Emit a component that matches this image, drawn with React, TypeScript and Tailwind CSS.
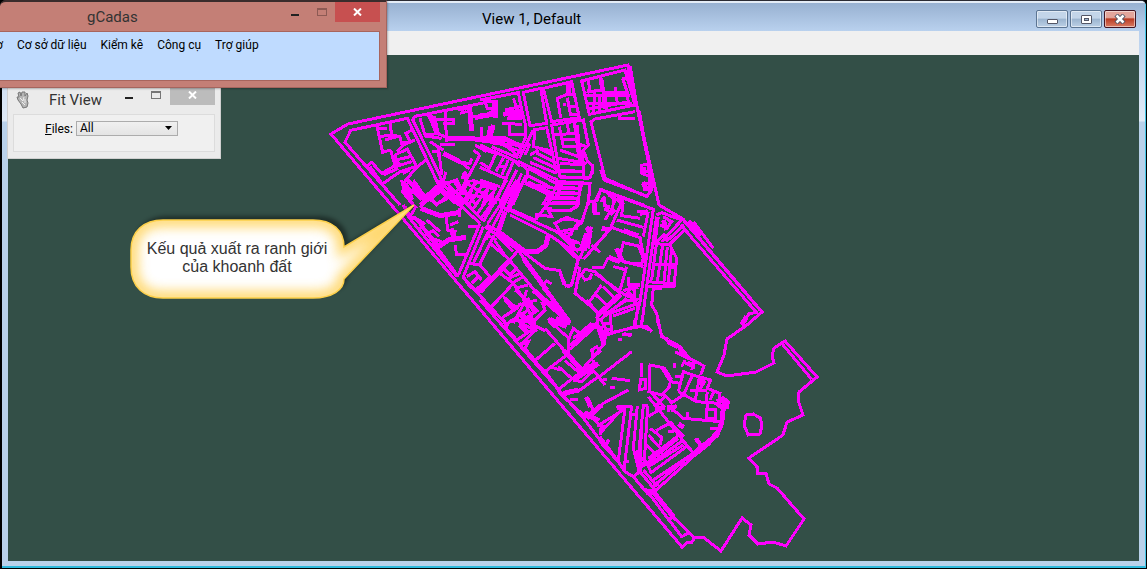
import { ReactNode } from "react"

const outline =
    "M331,134 L348,124 L500,92 L628,65 L659,205 L683,219 L762,312 L747,325 L727,339 L724,355 L717,372 L727,376 L756,372 L774,363 L772,356 L774,348 L785,341 L817,377 L799,392 L798,400 L803,415 L787,422 L783,435 L749,458 L757,467 L757,473 L766,473 L769,484 L777,488 L804,519 L786,546 L773,542 L758,544 L749,535 L751,525 L742,518 L721,551 L703,537 L695,537 L692,542 L688,542 L682,547 Z"

// Parcel edges, grouped by map sheet. Each sheet is drawn at 3 units per pixel.
const sheets = [
    {
        x: 320,
        y: 55,
        lines: `M240,450 L75,262 L92,226 L262,190 L300,270 L355,388 M500,142 L285,184 L278,195 L335,310 L375,395 L430,450
            M170,210 L188,292 L212,285 M170,222 H200 M178,245 L215,240 L210,205 M215,240 L240,245 L245,265 L270,260 L258,235 L275,225 M195,255 L230,245
            M212,285 L225,332 L185,355 L155,322 L142,332 M225,300 L262,282 L290,335 M228,315 L270,305 M225,335 L275,320 M230,290 L250,270 L285,255
            M150,335 L187,387 L240,350 L285,335 M190,360 L235,340 M248,355 L270,345
            M322,312 L290,337 L255,378 L248,410 L275,445 M265,375 L315,425 L355,390 M262,395 L305,435 M300,448 L358,397 L405,445 M328,432 L360,405 L382,430 L350,448 Z
            M300,190 L315,240 L360,235 M335,180 L347,235 M375,170 L380,260 M315,243 L365,250 M345,195 H402 V207 H368 M325,180 L350,235 L375,245
            M330,260 L370,285 M360,270 H405 M370,295 L415,315 L448,342 M355,275 L365,360 M335,290 H355 V305 M415,322 L450,325 L455,310 M378,350 L366,392
            M425,372 L438,350 M380,385 L410,375 L422,398 L405,412 Z M372,390 L405,430 M415,420 L480,300 M440,440 L465,380
            M415,165 L442,160 M420,175 L440,170 M455,185 L500,180 M485,215 V250 M460,285 L480,300 M465,270 L500,290`,
        heavy: "M375,252 H465 L540,262 M448,150 L455,228 M465,188 L500,180 M428,372 L436,355 M512,215 L505,250 M340,185 L352,235 M220,300 L235,330 M370,295 L415,318 M256,385 L275,435",
    },
    {
        x: 480,
        y: 55,
        lines: `M0,135 L115,113 L125,165 L138,215 L138,245 L108,310 M130,112 L182,100 L200,205 L150,212 Z M190,100 L275,80 L298,188 L215,200 Z
            M262,85 L268,115 L232,130 L242,188 M262,128 L272,182 M265,120 H285 M262,90 H278 M268,155 H290 M270,180 H298 M258,150 H250
            M305,78 L435,45 L465,150 L328,178 Z M325,75 L330,110 L365,105 L360,65 M318,122 H450 M365,70 L380,165 M322,145 H455 M405,95 L412,145 M428,70 L442,112 L375,112
            M345,112 V142 M340,150 V172 M360,125 V170 M325,162 L450,140 M330,98 L322,115 M440,120 L450,155 M425,70 H440
            M450,32 L470,150 L505,320 L515,405 L500,425 L375,370 L333,200 L345,192 L465,170 M420,178 V190 H465 M478,170 L520,400 M438,45 L465,150
            M485,328 V355 L510,365 M500,345 H515 M490,380 L495,402 H512 M490,328 H505
            M215,210 L310,195 L325,270 L310,285 L322,318 L338,332 L338,352 L325,370 L240,365 Z M220,240 L285,235 M238,215 L250,275 L290,275 M262,208 L268,240 M283,205 L300,320
            M240,285 L295,305 M235,310 L320,325 M245,255 H300 M308,285 V320 M240,325 L315,330 M238,345 L315,350 M312,330 V368 M290,265 L320,275
            M160,225 L200,218 L215,285 L230,355 M160,225 L118,310 M165,228 L160,275 L215,288 M135,300 L150,265 M175,278 L220,302 M168,293 L225,322 M160,308 L230,340 M150,322 L230,355 M150,300 L175,285
            M15,140 h25 v20 h-18 z M75,165 L120,155 M70,178 L125,172 M80,190 H125 M100,130 L122,190 M65,205 L125,208 M90,205 V240 H135 M5,215 V248
            M50,138 L48,190 M0,190 L45,165 M35,258 L125,290 M35,275 L105,305 M40,265 L120,270 M60,255 L110,300
            M0,270 L105,318 L120,335 M15,285 L48,295 L28,340 L0,322 M0,337 L75,370 M70,308 L48,350 M85,315 L65,360 M55,335 H75 M112,318 L232,375
            M100,320 L45,445 M110,345 L60,445 M125,355 L85,447 M138,360 L98,450 M145,340 L228,385 M140,360 L218,400 M145,380 L210,412 L190,447 H215 M235,375 L205,450 M125,330 L145,345 L135,385
            M240,380 L330,385 L325,450 M235,395 L298,400 M230,410 L298,415 M225,425 L295,430 M215,442 H290 M300,385 L295,450
            M335,440 L352,435 L362,403 L490,450 M362,440 L375,425 M385,415 L405,430 V445 M412,430 L430,445
            M0,375 L60,395 M0,390 L50,405 M28,390 L8,450 M45,400 L28,450`,
        heavy: "M48,135 L45,190 M0,183 L45,178 M40,210 L28,252 M70,178 L120,168 M0,252 H75 L125,275 M490,335 V355 M370,115 L378,160 M85,185 H125 M265,88 V118 M288,210 L298,300 M490,385 L498,402",
    },
    {
        x: 400,
        y: 180,
        lines: `M10,75 L25,110 L50,118 L175,290 M25,110 L170,288 M190,292 L325,440 M5,0 L15,45 L50,85 M22,0 L72,60 M40,0 L75,50 L120,15 M60,82 L122,25 L185,82 L172,100
            M95,55 L125,30 L138,50 L110,75 Z M118,0 L130,30 L240,130 M135,5 L250,122 M45,85 L30,110 L15,80 M160,0 L185,40 L300,60
            M40,110 L72,130 L60,145 M68,140 L120,200 M80,120 L120,155 M75,165 L100,152 L118,170 M95,175 L125,185 M140,110 L142,150 L165,155 L155,185 M150,135 L175,125 M205,140 H235
            M165,195 L170,225 L200,225 M180,85 V112
            M240,130 L175,285 M250,140 L190,290 L210,320 L240,335 M265,155 L220,250 M283,165 L240,250 M205,250 L240,255 L270,290 L228,330 M200,290 L225,275 L245,300 M215,310 L235,290
            M255,140 L355,210 L330,240 L270,190 M283,180 L310,220 M295,170 L340,215 M262,165 L290,180 M270,150 L258,180
            M330,240 L235,340 L270,385 L340,310 L300,280 M355,212 L510,425 M330,242 L440,375 M310,265 L330,285 L350,265 M325,295 L362,280 M335,310 L370,290 M345,325 L385,315 M345,330 L380,360
            M310,350 L350,385 L300,418 M270,385 L315,425 M340,310 L370,355 M360,340 L410,390 M380,355 L340,430 M410,385 L360,440 M350,400 L405,440 M355,375 L410,360 M330,420 L400,425 M380,330 L370,365
            M180,45 L210,0 M192,60 L230,5 M205,75 L252,10 M218,88 L270,15 M232,100 L280,35 M245,112 L295,45 M185,20 L225,70 M200,10 L265,50 M215,0 L290,25
            M250,125 L320,0 M262,132 L350,0 M278,140 L340,20 M375,10 L460,50 L405,120 L325,85 L368,8 M375,10 L465,25 L480,0 M455,40 L440,80 L455,110 L420,105
            M300,78 L470,155 L535,215 M330,105 L440,160 M260,135 L300,155 M410,100 V120
            M470,10 H540 M468,25 H540 M465,40 H535 M460,55 H535 M455,70 H535 M440,92 H510 L535,75 M430,85 H455
            M465,130 L500,112 L535,125 L530,145 L480,155 Z M490,160 L525,205 M500,175 L540,190
            M375,220 L435,265 L480,272 L490,310 L505,320 L515,312 L535,235 L500,200 L448,165 M425,320 L440,303 L455,312 M540,260 L525,340 L540,352
            M430,325 L510,425 M445,415 L465,440 L490,425 L510,430`,
        heavy: "M62,85 L120,107 L175,98 M115,200 L145,180 L198,172 M12,10 L22,45 M315,95 L295,155 L375,215 L412,215 L438,195 L446,160 M365,10 L320,95 M450,418 L500,440 M155,145 L160,170 M370,235 L440,330 M360,400 L395,430 M330,240 L240,335 M380,355 L405,395 M400,330 L500,420",
    },
    {
        x: 560,
        y: 170,
        lines: `M0,5 H70 V20 M0,22 H90 L97,0 M0,40 L90,42 L85,95 L65,158 M65,40 L50,110 L30,122 H0 M0,148 H35 L70,158
            M122,0 L132,30 L260,78 L275,60 M245,5 H270 M270,0 V60 M250,40 h22 M250,60 h20
            M85,95 H105 L122,60 L280,118 L240,395 L222,468 M290,140 L262,335 L245,465 M105,95 V132 H120 M135,85 V110 M145,75 L162,85 L158,112 L135,150 M190,85 L150,178 L70,268
            M165,85 L192,105 M165,120 L150,135 M170,150 L250,172 M188,105 L185,137 L240,145 M155,172 L245,205 M192,182 L230,195 M230,125 H265 M265,125 L250,200 M240,205 L252,265
            M190,218 L235,228 L250,265 L245,282 L195,278 L180,258 Z M145,262 L250,290 M95,292 H130 L145,262 M160,290 L200,300 M200,290 L180,360 M205,320 V345 H240 M190,362 L240,345 M195,375 L235,390 M220,345 L225,385
            M0,180 L40,240 H80 M0,218 L55,270 L35,345 L18,348 L0,310 M20,205 L50,165 L65,160 M20,200 L45,225 M95,225 L120,248 M60,265 L95,170 M15,185 L38,195
            M55,325 L75,298 L105,305 L180,370 L115,430 L82,400 L45,370 Z M65,315 L75,330 L90,325 L95,310 M125,345 L85,400 M130,350 L165,385 M105,310 L195,375 M108,375 L140,405
            M108,445 L185,375 M120,450 L200,385 M112,430 V460 L130,500 M110,460 L50,508 M95,460 L40,505 M150,430 L235,400 L225,470 L155,490 Z M160,438 L225,415 M155,420 L200,390 L230,395 M130,460 H150 M135,478 H150 M130,435 L155,420
            M222,468 L262,470 L275,485 M190,490 L215,498 M290,135 L305,128 L365,150 L305,215 M310,140 L335,155 L320,175 L300,165 M290,215 L315,190 M372,165 L318,215 M385,190 L375,178 L330,222
            M280,220 L330,225 L350,265 L342,350 H262 M290,215 L275,330 M308,225 L292,335 M322,230 L312,335 M335,235 L325,335 M275,285 H345 M265,335 L340,342 M275,355 H305 M280,355 L275,405 L290,430 L305,500 L325,508
            M295,140 L285,220 M370,150 L600,420 M362,165 L590,428 L568,430 L545,465 M400,155 L460,235`,
        heavy: "M78,172 L90,185 L82,235 M65,235 L80,190 M145,105 L138,125 M170,235 L185,270 M240,130 L262,125 M105,100 V130 M385,155 L425,195 M310,150 L320,180 M200,365 L220,385 M120,470 L130,508 M125,175 L150,180 M560,440 L545,465 M330,290 L345,290 M190,182 L235,198 M205,355 L235,350 M145,262 L180,275",
    },
    {
        x: 470,
        y: 300,
        lines: `M30,0 L345,360 L405,440 M60,25 L85,0 M105,0 L130,30 L95,55 M128,30 L155,10 M105,75 L175,30 L165,5 M100,75 L140,120 L200,80 L225,92 M140,50 L165,95 M150,70 L185,85 M160,60 L205,30 M175,30 L195,75 M185,70 L225,30 L215,5
            M240,5 L300,70 M235,60 L300,118 M150,135 L200,88 M225,85 L290,160 M255,130 L195,182 L165,145 L175,125 L150,135 L225,215 L290,165 L335,215 L265,268 L225,215 M265,200 L305,235 M285,182 L330,220 M240,200 L270,210
            M295,160 V120 L310,85 L330,100 L355,80 L380,70 M300,135 L378,75 M300,148 L385,72 M350,0 L385,40 L380,80 L405,110 L400,135 L335,210 M385,40 L440,0 M390,55 L415,100
            M365,150 L380,140 L390,155 L370,170 Z M310,240 L335,245 L370,212 M340,210 L375,190 M370,180 L368,210 L388,230 L485,155 M385,230 L330,270 L280,285 M385,230 L405,255 M400,240 H412 M425,235 L480,242 M420,262 H434
            M350,355 L400,310 L475,270 M300,300 H325 M350,290 L370,330 L352,352 M345,335 L395,380 M390,405 L395,370 L460,330 L440,320 H480 M380,375 L405,380 L390,400 M370,350 L388,360 M405,435 L415,420 M405,100 L420,105 M445,118 h12 M455,105 H485 M255,255 L270,280 L350,355`,
        heavy: "M245,5 L270,35 L298,70 M258,55 L298,68 M240,62 L258,80 M175,60 L195,80 M280,150 L335,210 M385,80 L402,130 M345,205 L372,195 M280,280 L325,270 M350,292 L362,320 M150,75 L175,100 M350,355 L395,315 M310,240 L385,190 M345,335 L360,355",
    },
    {
        x: 600,
        y: 320,
        lines: `M172,0 L185,45 L205,65 L240,80 L268,115 L312,138 L302,165 M225,95 L265,115 M250,125 L285,145 M245,140 L255,120 M285,125 L275,150 M225,128 V145 M125,130 V172 M122,178 H137 V205 L118,210 Z
            M150,135 L190,143 L212,178 L208,200 L185,225 L147,215 Z M145,230 L280,400 M190,220 L215,248 L250,225 L278,165 L250,155 L245,180 M165,262 L198,225 M150,215 L195,262 M212,185 L240,190 M225,170 H245
            M235,215 L290,245 L355,250 L360,220 L322,205 L332,180 L278,165 M298,172 L285,245 M310,180 L300,212 M270,210 L320,212 M322,215 L318,245 M342,215 L330,240 M365,230 L385,245 L382,262 L365,262 M250,155 L235,215
            M215,265 L250,295 L360,305 M230,255 L215,275 M262,275 V292 M320,270 H348 V295 H320 Z M322,250 V272 M330,327 H350 M235,312 L252,322 M290,355 L305,378 M205,255 V275
            M145,290 L195,258 M168,332 L212,308 L252,350 M145,345 L188,392 M150,325 L185,352 L180,375 M135,370 L165,400 L150,415 M205,335 H222 M145,415 L238,345 M140,440 L250,360
            M75,265 L55,422 M95,258 L72,450 M112,258 L100,385 L115,445 M130,258 L118,380 L125,445 M143,258 L132,440 M50,265 L95,258 M125,258 H143 M95,285 H108 M0,340 L65,268 M0,350 L55,425 M15,380 L28,360
            M432,315 L438,285 L460,282 L482,295 L485,320 L480,342 L445,345 Z M545,70 L635,178 M105,0 V20 M125,0 V20 L155,32 M35,38 L105,22 L125,20`,
        heavy: "M352,250 L370,265 L365,310 L350,345 L282,400 M262,130 L280,135 M210,262 H222 M295,178 L315,192 M205,65 L235,80 M350,245 L372,240 M238,82 L262,112 M195,262 L165,268 M15,30 L10,75 M115,390 L118,440 M365,235 L382,258 M190,145 L212,180 M235,312 L250,322",
    },
    {
        x: 600,
        y: 430,
        lines: `M262,48 L150,130 M250,45 L145,110 M272,75 L160,150 M355,10 L285,75 L160,188 M285,65 L170,160 M235,25 L140,100 M245,30 L282,70
            M100,140 L120,125 L165,180 L142,190 Z M130,120 L168,165 M0,35 L55,95 L75,125 L100,140 M75,95 H88 M110,70 L120,122 M130,80 L155,130 M115,90 H135
            M150,195 L245,320 L268,308 L220,262 L160,190 M205,270 L220,260 L285,325 M135,175 L150,195 M125,0 L120,70 M285,25 L300,45 L320,40`,
        heavy: "M350,10 L325,40 L285,72 M145,185 H165 M155,180 L220,260 M115,75 L120,130 M160,165 L175,160",
    },
]

function ParcelMap() {
    return (
        <svg
            width="812"
            height="506"
            viewBox="8 55 812 506"
            className="block"
            fill="none"
            stroke="#ff00ff"
            strokeWidth="3"
            shapeRendering="crispEdges"
            role="img"
            aria-label="Parcel boundaries"
        >
            <path d={outline} />
            {sheets.map((sheet) => (
                <g key={`${sheet.x}-${sheet.y}`} transform={`translate(${sheet.x} ${sheet.y}) scale(0.33333)`}>
                    <path d={sheet.lines} strokeWidth="9" />
                    <path d={sheet.heavy} strokeWidth="15" />
                </g>
            ))}
        </svg>
    )
}

const bubble =
    "M163,220 H313 C332,220 344,230 344,247 L414,205 L344,279 C344,290 332,298 313,298 H163 C144,298 131,287 131,267 V250 C131,231 144,220 163,220 Z"

function Callout() {
    return (
        <div className="absolute top-[145px] left-[108px] w-[312px]">
            <svg width="312" height="108" viewBox="116 200 312 108" className="block">
                <defs>
                    <clipPath id="bubble-clip">
                        <path d={bubble} />
                    </clipPath>
                    <filter id="bubble-glow" x="-10%" y="-20%" width="120%" height="140%">
                        <feGaussianBlur stdDeviation="6" />
                    </filter>
                    <filter id="bubble-shadow" x="-10%" y="-20%" width="120%" height="140%">
                        <feGaussianBlur stdDeviation="2" />
                    </filter>
                </defs>
                <path d={bubble} fill="#000" opacity="0.4" transform="translate(4 -4)" filter="url(#bubble-shadow)" />
                <path d={bubble} fill="#fff" />
                <g clipPath="url(#bubble-clip)">
                    <path d={bubble} fill="none" stroke="#ffcf4d" strokeWidth="14" opacity="0.8" filter="url(#bubble-glow)" />
                </g>
                <path d={bubble} fill="none" stroke="#fccf4a" strokeWidth="1.5" />
            </svg>
            <p className="absolute top-10 left-[15px] w-[212px] text-center text-[16px] leading-[18px] text-[#333] font-['Liberation_Sans',sans-serif]">
                Kếu quả xuất ra ranh giới
                <br />
                của khoanh đất
            </p>
        </div>
    )
}

function AeroButton({ label, className, children }: { label: string; className: string; children: ReactNode }) {
    return (
        <button
            type="button"
            aria-label={label}
            className={`flex h-[18px] w-8 items-center justify-center rounded-[2px] border shadow-[inset_0_0_0_1px_rgba(255,255,255,0.5)] ${className}`}
        >
            {children}
        </button>
    )
}

const aeroBlue = "border-[#5c7593] bg-linear-to-b from-[#c3d5e9] from-45% via-[#9bb4cf] via-50% to-[#bcd0e6]"

function FitViewWindow() {
    return (
        <section className="absolute top-[78px] left-[7px] w-[214px] border border-[#d0d0d0] bg-[#ebebeb] px-[5px] pb-1.5 text-[#333]">
            <header className="flex h-[35px] items-start">
                <svg width="16" height="18" viewBox="0 0 16 18" className="mt-3 ml-[3px] shrink-0">
                    <path
                        d="M2,2 L4,1 L5,5 L6,1 L9,1 L9,5 L11,2 L12,5 L11,9 L12,12 L11,16 L7,17 L5,13 L2,9 L1,6 L3,6 Z"
                        fill="#b5b5b5"
                        stroke="#777"
                    />
                    <path d="M4,7 L7,10 L8,6 M6,11 L9,14 M9,8 V12" fill="none" stroke="#eee" />
                </svg>
                <h2 className="mt-3 ml-[17px] w-[62px] text-[15px] leading-[18px] whitespace-nowrap font-['Roboto',sans-serif]">
                    Fit View
                </h2>
                <button type="button" aria-label="Minimize" className="mt-[18px] ml-3.5 h-0.5 w-2 bg-[#222]" />
                <button type="button" aria-label="Maximize" className="mt-3 ml-[18px] h-2 w-2.5 border border-t-2 border-[#777]" />
                <button
                    type="button"
                    aria-label="Close"
                    className="ml-auto flex h-[26px] w-[45px] items-end justify-center bg-[#bcbcbc] pb-1.5"
                >
                    <svg width="9" height="8" viewBox="0 0 9 8" stroke="#fff" strokeWidth="2">
                        <path d="M1,0.5 L8,7.5 M8,0.5 L1,7.5" />
                    </svg>
                </button>
            </header>
            <div className="flex h-[38px] items-start gap-[7px] border border-[#dcdcdc] bg-[#f0f0f0] pt-1.5 pl-[31px] text-[12px] text-black font-['Roboto',sans-serif]">
                <label htmlFor="files" className="w-6 leading-[16px] whitespace-nowrap">
                    <span className="underline">F</span>iles:
                </label>
                <div className="relative">
                    <select
                        id="files"
                        className="block h-[15px] w-[102px] appearance-none border border-[#acacac] bg-linear-to-b from-[#f0f0f0] to-[#e4e4e4] pl-[3px] text-[12px] leading-[13px]"
                    >
                        <option>All</option>
                    </select>
                    <svg width="7" height="4" viewBox="0 0 7 4" className="pointer-events-none absolute top-[5px] right-1.5">
                        <path d="M0,0 H7 L3.5,4 Z" fill="#000" />
                    </svg>
                </div>
            </div>
        </section>
    )
}

const menus = ["Cơ sở dữ liệu", "Kiểm kê", "Công cụ", "Trợ giúp"]

function CadasWindow() {
    return (
        <section className="absolute top-0 left-0 w-[387px] overflow-hidden rounded-tl-md border-t-2 border-r border-b border-t-[#3a2c2c] border-r-[#a5655e] border-b-[#a5655e] bg-[#c47f76] pr-1.5 pb-1.5 shadow-[1px_1px_2px_rgba(0,0,0,0.25)]">
            <header className="flex h-[29px] items-start">
                <h1 className="mt-1.5 ml-[87px] w-[50px] text-[15px] leading-[18px] text-[#333] font-['Roboto',sans-serif]">
                    gCadas
                </h1>
                <button type="button" aria-label="Minimize" className="mt-3 ml-auto h-0.5 w-2 bg-[#222]" />
                <button type="button" aria-label="Maximize" className="mt-1.5 ml-[18px] h-2 w-2.5 border border-t-2 border-[#8d5a54]" />
                <button
                    type="button"
                    aria-label="Close"
                    className="ml-2 flex h-5 w-[45px] items-center justify-center bg-[#c75050]"
                >
                    <svg width="9" height="8" viewBox="0 0 9 8" stroke="#fff" strokeWidth="2">
                        <path d="M1,0.5 L8,7.5 M8,0.5 L1,7.5" />
                    </svg>
                </button>
            </header>
            <nav className="flex h-[50px] items-start gap-3.5 border border-l-0 border-[#a8655d] bg-[#bfdbff] pt-1.5 text-[12px] leading-[14px] whitespace-nowrap text-black font-['Roboto',sans-serif]">
                <a href="#" className="-ml-1">
                    ơ
                </a>
                {menus.map((menu) => (
                    <a key={menu} href="#">
                        {menu}
                    </a>
                ))}
            </nav>
        </section>
    )
}

export default function App() {
    return (
        <div className="relative flex min-h-screen flex-col overflow-hidden bg-black">
            <main className="flex flex-1 flex-col overflow-hidden rounded-t-md border-t border-r border-b border-l-2 border-t-[#2b2b33] border-r-black border-b-black border-l-black">
                <div className="flex flex-1 flex-col border-t-2 border-r border-b-2 border-t-[#e4ecf6] border-r-[#45c8e8] border-b-[#2fb9dc] bg-[#b9d1ea]">
                    <header className="flex h-7 items-center bg-linear-to-b from-[#98b1d1] to-[#b9d1ee] pt-1 pr-[9px]">
                        <h1 className="ml-[480px] text-[15px] leading-5 whitespace-nowrap text-black font-['Roboto',sans-serif]">
                            View 1, Default
                        </h1>
                        <div className="ml-auto flex gap-0.5">
                            <AeroButton label="Minimize" className={aeroBlue}>
                                <span className="mt-1 h-[5px] w-[11px] rounded-[1px] border border-[#535666] bg-white" />
                            </AeroButton>
                            <AeroButton label="Restore" className={aeroBlue}>
                                <span className="flex h-[9px] w-[11px] items-center justify-center rounded-[1px] border border-[#535666] bg-white">
                                    <span className="h-[3px] w-[5px] border border-[#535666] bg-[#9bb4cf]" />
                                </span>
                            </AeroButton>
                            <AeroButton
                                label="Close"
                                className="border-[#431422] bg-linear-to-b from-[#e3a59b] from-40% via-[#b93a22] via-50% to-[#d97a63]"
                            >
                                <svg width="12" height="10" viewBox="0 0 12 10" fill="none">
                                    <path d="M2,1 L10,9 M10,1 L2,9" stroke="#535666" strokeWidth="4.5" />
                                    <path d="M2.5,1.5 L9.5,8.5 M9.5,1.5 L2.5,8.5" stroke="#fff" strokeWidth="2.5" />
                                </svg>
                            </AeroButton>
                        </div>
                    </header>
                    {/* Window frame: glass sheen fades in down the sides, then stops */}
                    <div className="flex flex-1 flex-col bg-linear-to-b from-[#b9d1ee] from-0% via-[#e0eaf6] via-[90px] to-[#b9d1ea] to-[91px] px-1.5 pb-[5px]">
                        <div className="h-6 bg-[#f0f0f0]" />
                        <div className="relative flex-1 overflow-hidden bg-[#334f47]">
                            <ParcelMap />
                            <Callout />
                        </div>
                    </div>
                </div>
            </main>
            <FitViewWindow />
            <CadasWindow />
        </div>
    )
}
